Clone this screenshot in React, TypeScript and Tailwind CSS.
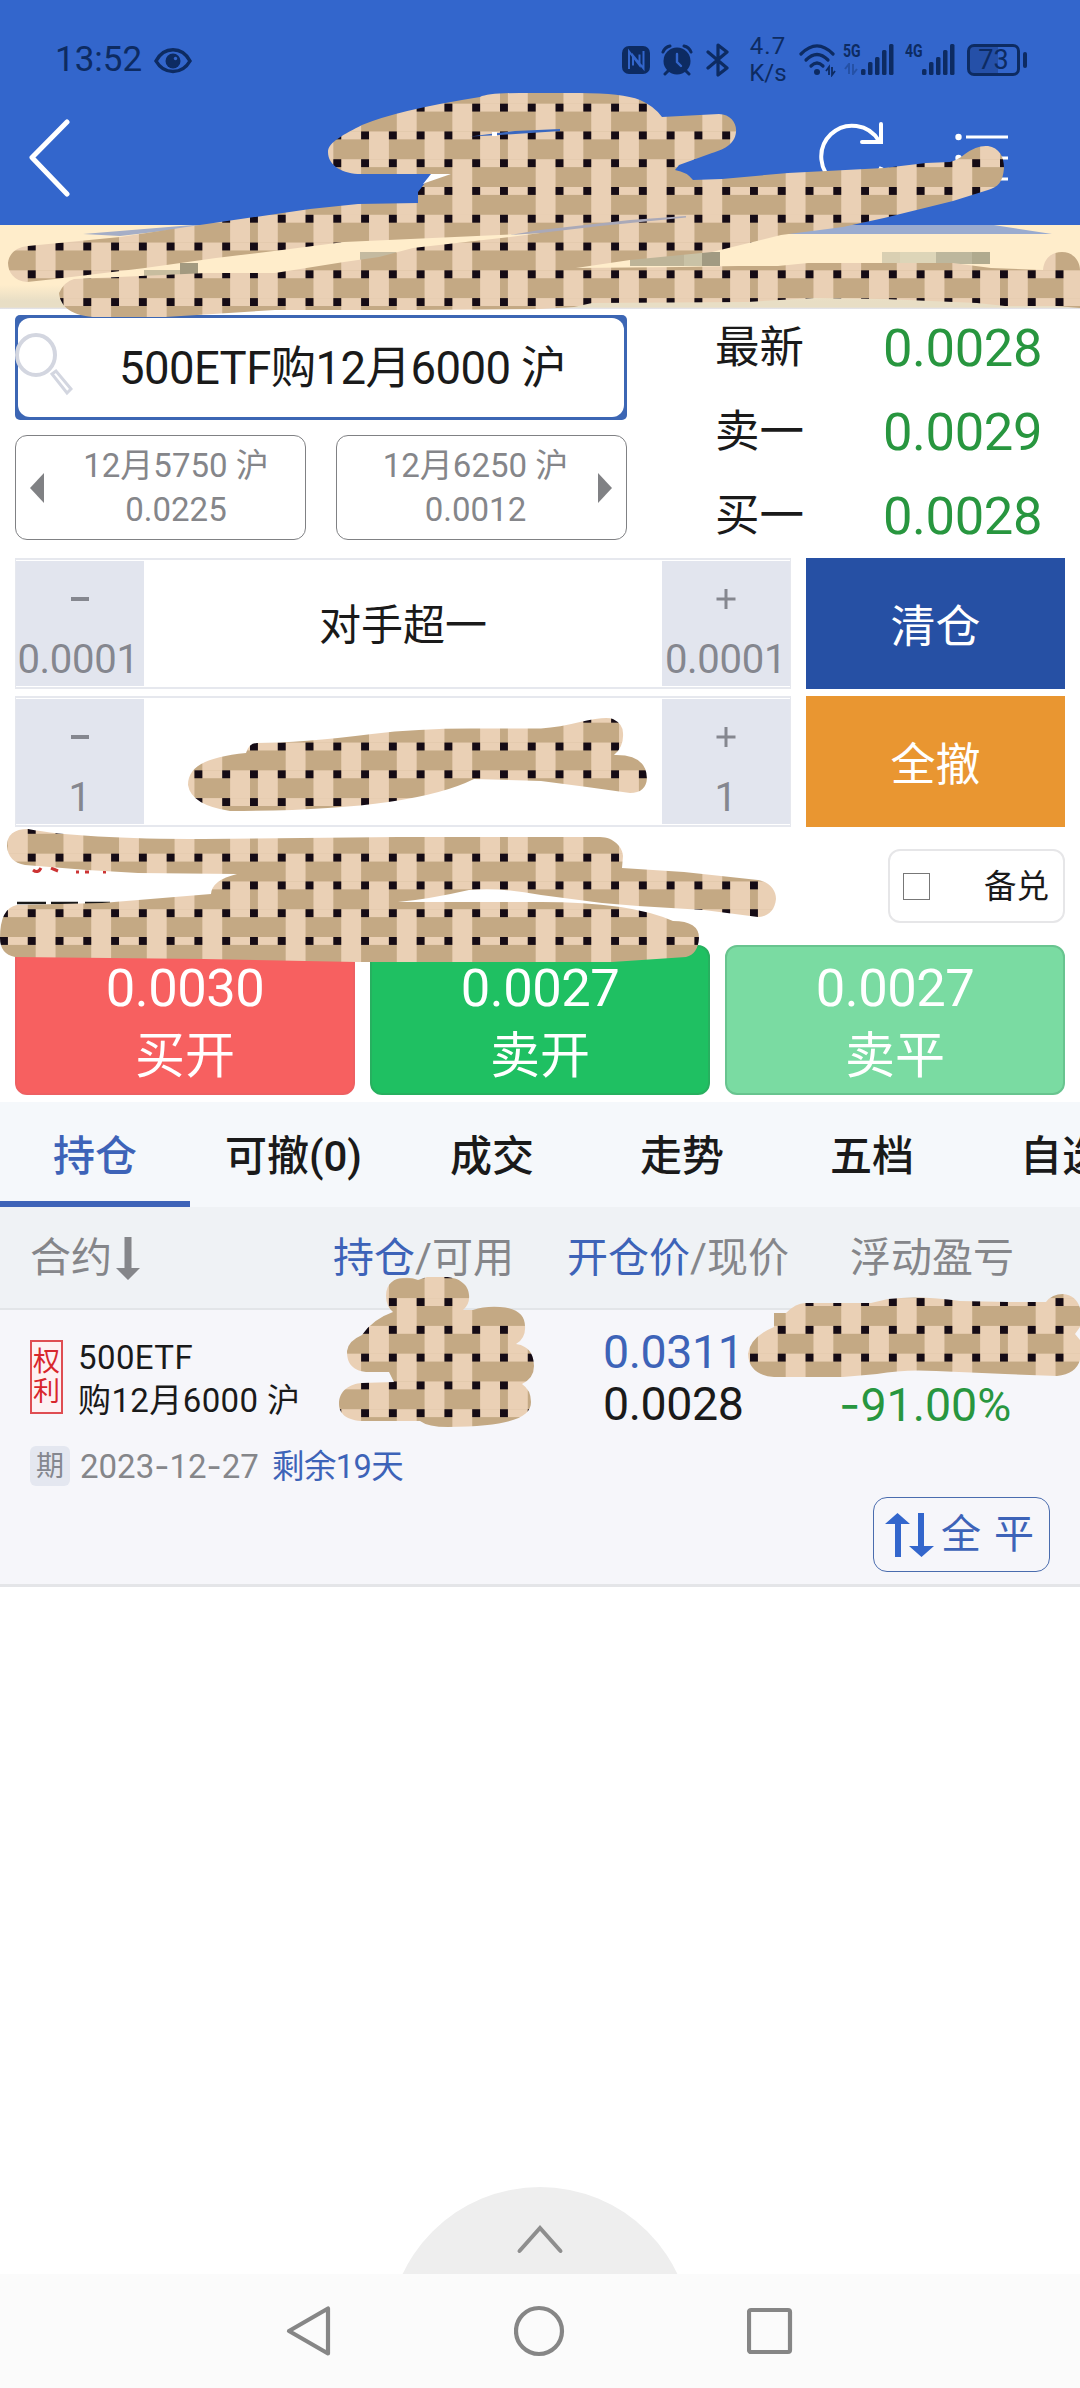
import type { ReactNode } from 'react';

const PITCH = 250 / 9;
const GAP = 7.9;

const quotes = [
  { label: '最新', value: '0.0028' },
  { label: '卖一', value: '0.0029' },
  { label: '买一', value: '0.0028' },
];

const tabs = ['持仓', '可撤(0)', '成交', '走势', '五档', '自选'];

function SignalBars() {
  return (
    <svg width="34" height="32" viewBox="0 0 34 32" fill="currentColor">
      <rect x="0" y="25" width="4.5" height="6" rx="1.5" />
      <rect x="7" y="18" width="4.5" height="13" rx="1.5" />
      <rect x="14" y="13" width="4.5" height="18" rx="1.5" />
      <rect x="21" y="6" width="4.5" height="25" rx="1.5" />
      <rect x="28" y="0" width="4.5" height="31" rx="1.5" />
    </svg>
  );
}

function StatusBar() {
  return (
    <div className="flex h-[120px] items-center pl-[55px] pr-[53px] text-[#0d2b62]">
      <span className="text-[35px] leading-[40px] w-[99px]">13:52</span>
      <svg width="38" height="28" viewBox="0 0 38 28" className="mt-[2px]">
        <path d="M2 14C10-1 28-1 36 14C28 28 10 28 2 14Z" fill="none" stroke="currentColor" strokeWidth="3.5" />
        <circle cx="19" cy="14" r="7.5" fill="currentColor" />
        <circle cx="21.5" cy="11.5" r="1.7" fill="#3366cc" />
      </svg>
      <div className="ml-auto flex items-center">
        <svg width="30" height="30" viewBox="0 0 30 30">
          <rect x="1" y="1" width="28" height="28" rx="7" fill="currentColor" />
          <path d="M8 24V6.5L18.500 20V9.500M22.5 6V23.5L12 10.500V20.500" fill="none" stroke="#3366cc" strokeWidth="2" />
        </svg>
        <svg width="32" height="32" viewBox="0 0 32 32" className="ml-[10px]">
          <circle cx="16" cy="17" r="13.5" fill="currentColor" />
          <path d="M2 8Q4 3 9 2M30 8Q28 3 23 2M7 27L4 30M25 27L28 30" fill="none" stroke="currentColor" strokeWidth="3" strokeLinecap="round" />
          <path d="M16 10V18L20 22" fill="none" stroke="#3366cc" strokeWidth="2.4" strokeLinecap="round" />
        </svg>
        <svg width="24" height="34" viewBox="0 0 24 34" className="ml-[13px]">
          <path d="M2 9L21 25L12 32V2L21 9L2 25" fill="none" stroke="currentColor" strokeWidth="3.2" strokeLinejoin="round" strokeLinecap="round" />
        </svg>
        <div className="ml-[17px] w-[42px] text-center text-[24px] leading-[27px]">
          <div className="tracking-[1px]">4.7</div>
          <div>K/s</div>
        </div>
        <svg width="38" height="34" viewBox="0 0 38 34" className="ml-[10px]">
          <g fill="none" stroke="currentColor" strokeWidth="3.2" strokeLinecap="round">
            <path d="M2 11Q18-5 34 11" />
            <path d="M7 17Q18 6 29 17" />
            <path d="M12 23Q18 17 24 23" />
          </g>
          <circle cx="18" cy="29" r="3" fill="currentColor" />
          <path d="M30 32V24L27 28M33 24V32L36 28" fill="none" stroke="currentColor" strokeWidth="1.8" />
        </svg>
        <div className="ml-[6px] flex">
          <div className="flex w-[18px] flex-col">
            <span className="h-[19px] w-[23px] origin-left scale-x-[0.78] whitespace-nowrap text-[18px] font-bold leading-[14px]">5G</span>
            <svg width="14" height="12" viewBox="0 0 14 12" className="ml-[1px] opacity-35">
              <path d="M5 11V1L1 6M9 1V11L13 6" fill="none" stroke="currentColor" strokeWidth="2" />
            </svg>
          </div>
          <SignalBars />
        </div>
        <div className="ml-[10px] flex">
          <div className="w-[17px]">
            <span className="block w-[23px] origin-left scale-x-[0.78] whitespace-nowrap text-[18px] font-bold leading-[14px]">4G</span>
          </div>
          <SignalBars />
        </div>
        <div className="ml-[11px] flex h-[32px] w-[53px] items-center justify-center rounded-[7px] border-[3px] border-current bg-[linear-gradient(90deg,#2550a8_60%,#3366cc_60%)] text-[27px] leading-[27px]">
          73
        </div>
        <div className="ml-[3px] h-[16px] w-[4px] rounded-sm bg-current" />
      </div>
    </div>
  );
}

function TopBar() {
  return (
    <div className="h-[225px] bg-[#3366cc]">
      <StatusBar />
      <div className="flex h-[80px] items-center pl-[29px] pr-[72px] text-white">
        <svg width="42" height="78" viewBox="0 0 42 78" className="-mt-[4px]">
          <path d="M38 3L3 38.500L38 75" fill="none" stroke="currentColor" strokeWidth="5" strokeLinecap="round" strokeLinejoin="round" />
        </svg>
        <svg width="68" height="72" viewBox="0 0 68 72" className="ml-auto -mt-[8px]">
          <path d="M64.500 47A31 31 0 1 1 62 21" fill="none" stroke="currentColor" strokeWidth="4" />
          <path d="M64 4V22H45" fill="none" stroke="currentColor" strokeWidth="4" strokeLinecap="round" />
        </svg>
        <svg width="53" height="48" viewBox="0 0 53 48" className="ml-[70px] -mt-[7px]">
          <path d="M11 4H53M11 25H53M11 46H53" stroke="currentColor" strokeWidth="3" />
          <g fill="currentColor">
            <circle cx="3.500" cy="4" r="3.200" />
            <circle cx="3.500" cy="25" r="3.200" />
            <circle cx="3.500" cy="46" r="2" />
          </g>
        </svg>
      </div>
    </div>
  );
}

function NoticeBar() {
  return (
    <div className="flex h-[84px] flex-col bg-[linear-gradient(180deg,#ffedcb_0_60px,#e8dec5_76px_82px,#dfe3f2)]">
      <svg width="1080" height="60" viewBox="0 0 1080 60">
        <path d="M83 9L193 0H215L120 11Z" fill="#a5aec6" />
        <path d="M770 9L884 -8H945L1000 1L1052 9Z" fill="#9aabcf" />
        <rect x="882" y="27" width="18" height="12" fill="#d9cfb2" />
        <rect x="900" y="27" width="36" height="12" fill="#ddd5b8" />
        <rect x="936" y="27" width="36" height="12" fill="#bdb79d" />
        <rect x="972" y="27" width="18" height="12" fill="#b0aa8e" />
        <rect x="360" y="27" width="36" height="12" fill="#c4baa0" />
        <rect x="630" y="27" width="54" height="14" fill="#bdb498" />
        <rect x="684" y="27" width="18" height="14" fill="#c9c2a6" />
        <rect x="702" y="27" width="18" height="14" fill="#a19a82" />
        <rect x="144" y="45" width="36" height="12" fill="#c8bd9f" />
        <rect x="180" y="38" width="18" height="12" fill="#a39a80" />
      </svg>
    </div>
  );
}

function SideContract({ name, price, side }: { name: string; price: string; side: 'left' | 'right' }) {
  return (
    <div className="flex h-[105px] w-[291px] items-center rounded-[12px] border-[1.5px] border-[#808184] pt-[1px] text-[33px] leading-[44px] text-[#85868a]">
      {side === 'left' && (
        <svg width="14" height="30" viewBox="0 0 14 30" className="ml-[14px]">
          <path d="M14 0V30L0 15Z" fill="#808184" />
        </svg>
      )}
      <div className={side === 'left' ? 'flex-1 pl-[3px] text-center' : 'flex-1 pl-[16px] text-center'}>
        <div className="whitespace-nowrap">{name}</div>
        <div>{price}</div>
      </div>
      {side === 'right' && (
        <svg width="14" height="30" viewBox="0 0 14 30" className="mr-[14px]">
          <path d="M0 0V30L14 15Z" fill="#808184" />
        </svg>
      )}
    </div>
  );
}

function ContractPanel() {
  return (
    <div className="flex h-[249px] px-[15px] pt-[6px]">
      <div className="w-[612px]">
        <div className="h-[105px] rounded-[5px] bg-[#3c66b4] p-[3px]">
          <div className="flex h-full items-center rounded-[12px] bg-white">
            <svg width="58" height="74" viewBox="0 0 58 74" className="-ml-[3px] -mt-[3px]">
              <g fill="none" stroke="#d3d6e0" strokeWidth="4">
                <ellipse cx="21" cy="26" rx="19" ry="20" />
                <path d="M37 45L41 42L56 60L52 64Z" strokeWidth="3" />
              </g>
            </svg>
            <span className="ml-[46px] mt-[2px] whitespace-nowrap text-[45.5px] leading-[60px] tracking-[-0.6px] text-[#1a1a1a]">500ETF购12月6000 沪</span>
          </div>
        </div>
        <div className="mt-[15px] flex justify-between">
          <SideContract name="12月5750 沪" price="0.0225" side="left" />
          <SideContract name="12月6250 沪" price="0.0012" side="right" />
        </div>
      </div>
      <div className="ml-[88px] flex-1 pr-[23px]">
        {quotes.map((q) => (
          <div key={q.label} className="flex h-[84px] -translate-y-[9px] items-center justify-between">
            <span className="text-[44.5px] text-[#1a1a1a]">{q.label}</span>
            <span className="text-[52.5px] tracking-[-0.4px] text-[#28963f]">{q.value}</span>
          </div>
        ))}
      </div>
    </div>
  );
}

function StepButton({ sign, step }: { sign: 'minus' | 'plus'; step: string }) {
  return (
    <div className="flex w-[128px] flex-col items-center bg-[#e2e5ee] text-[#85878f]">
      <svg width="20" height="20" viewBox="0 0 20 20" className="mt-[28px]">
        {sign === 'minus' ? (
          <path d="M1 10H19" stroke="currentColor" strokeWidth="4" />
        ) : (
          <path d="M0.500 10H19.500M10 0V20" stroke="currentColor" strokeWidth="3" />
        )}
      </svg>
      <span
        className={`mt-[25.5px] text-[40px] leading-[50px] tracking-[-0.3px] ${
          step.length > 1 && sign === 'minus' ? '-ml-[4px]' : '-ml-[1px]'
        }`}
      >
        {step}
      </span>
    </div>
  );
}

function StepperRow({ step, value, action, tone }: { step: string; value: ReactNode; action: string; tone: string }) {
  return (
    <div className="flex h-[131px] gap-[15px]">
      <div className="flex w-[776px] justify-between border border-y-2 border-[#e6e8ee] py-[1px]">
        <StepButton sign="minus" step={step} />
        <div className="flex items-center pt-[3px] text-[42px] text-[#1a1a1a]">{value}</div>
        <StepButton sign="plus" step={step} />
      </div>
      <div className={`flex flex-1 items-center justify-center pt-[8px] text-[45px] text-white ${tone}`}>{action}</div>
    </div>
  );
}

function OrderButton({ price, label, tone }: { price: string; label: string; tone: string }) {
  return (
    <div className={`flex h-[150px] w-[340px] flex-col items-center rounded-[12px] border-2 text-white ${tone}`}>
      <span className="mt-[10px] text-[52.5px] leading-[62px] tracking-[-0.5px]">{price}</span>
      <span className="mt-[7px] text-[50px] leading-[60px]">{label}</span>
    </div>
  );
}

function Tabs() {
  return (
    <div className="flex h-[105px] overflow-hidden bg-[#f5f8fb] text-[42px] font-medium text-[#1a1a1a]">
      {tabs.map((tab, i) => (
        <div
          key={tab}
          className={`flex shrink-0 items-center justify-center ${i === 1 ? 'w-[207px]' : 'w-[190px]'} ${
            i === 0 ? 'border-b-[6px] border-[#3d63b8] pt-[9px] text-[#3d63b8]' : 'pt-[3px]'
          }`}
        >
          {tab}
        </div>
      ))}
    </div>
  );
}

function PositionTable() {
  return (
    <>
      <div className="flex h-[103px] items-center border-b-2 border-[#e2e5e8] bg-[#eff2f5] pl-[30px] pt-[2px] text-[41px] text-[#85868a]">
        <div className="flex w-[303px] items-center">
          合约
          <svg width="24" height="43" viewBox="0 0 24 43" className="ml-[4px]">
            <path d="M8.500 0H15.500V31H24L12 43L0 31H8.500Z" fill="currentColor" />
          </svg>
        </div>
        <div className="w-[234px]">
          <span className="text-[#3d63b8]">持仓</span>/可用
        </div>
        <div className="w-[283px]">
          <span className="text-[#3d63b8]">开仓价</span>/现价
        </div>
        <div>浮动盈亏</div>
      </div>
      <div className="h-[277px] border-b-[3px] border-[#e4e5e8] bg-[#f6f6fa] px-[30px] pt-[26px]">
        <div className="flex h-[90px]">
          <div className="mt-[4px] flex h-[74px] w-[33px] flex-col items-center justify-center border-2 border-[#df4d52] bg-[#fdf1f3] text-[27px] leading-[30px] text-[#d8262c]">
            <span>权</span>
            <span>利</span>
          </div>
          <div className="ml-[15px] w-[525px] text-[33px] leading-[43px] tracking-[0.4px] text-[#1a1a1a]">
            <div>500ETF</div>
            <div>购12月6000 沪</div>
          </div>
          <div className="-mt-[10px] w-[236px] text-[46.5px] leading-[52px] tracking-[-0.4px]">
            <div className="text-[#3d63b8]">0.0311</div>
            <div className="text-[#1a1a1a]">0.0028</div>
          </div>
          <div className="mt-[42px] whitespace-nowrap text-[46.500px] leading-[52px] text-[#28963f]">
            <span className="font-['Inter']">-</span>91.00%
          </div>
        </div>
        <div className="mt-[20px] flex h-[40px] items-center text-[33px] leading-[40px]">
          <span className="flex h-[40px] w-[40px] items-center justify-center rounded-[6px] bg-[#e4e7f0] pt-[2px] text-[28px] text-[#85878f]">期</span>
          <span className="ml-[10px] w-[192px] whitespace-nowrap text-[#85868a]">
            2023<span className="font-['Inter']">-</span>12<span className="font-['Inter']">-</span>27
          </span>
          <span className="pt-[2px] text-[32.5px] tracking-[-0.6px] text-[#3d63b8]">剩余19天</span>
        </div>
        <div className="mt-[11px] ml-auto flex h-[75px] w-[177px] items-center rounded-[14px] border-[1.5px] border-[#4a6cae] pl-[11px] text-[40px] text-[#3d63b8]">
          <svg width="50" height="44" viewBox="0 0 50 44">
            <path d="M10 44V11H0L12.500 0L25 11H16V44ZM33 0V33H24L36.500 44L49 33H39V0Z" fill="#3366cc" />
          </svg>
          <span className="ml-[6px]">全</span>
          <span className="ml-[13px]">平</span>
        </div>
      </div>
    </>
  );
}

function BottomBar() {
  return (
    <div className="mt-auto">
      <svg width="304" height="87" viewBox="0 0 304 87" className="mx-auto block">
        <circle cx="152" cy="152" r="152" fill="#eeeeee" />
        <path d="M131.500 64L152 41L172.500 64" fill="none" stroke="#8e8e8e" strokeWidth="4" strokeLinecap="round" />
      </svg>
      <div className="flex h-[114px] items-center justify-between bg-[#fbfbfb] pl-[285px] pr-[285px]">
        <svg width="48" height="52" viewBox="0 0 48 52" fill="none" stroke="#868686" strokeWidth="4.200" strokeLinejoin="round">
          <path d="M43 3.500V48.500L4 26Z" />
        </svg>
        <svg width="52" height="52" viewBox="0 0 52 52" fill="none" stroke="#868686" strokeWidth="4.200">
          <circle cx="25" cy="26" r="23" />
        </svg>
        <svg width="48" height="52" viewBox="0 0 48 52" fill="none" stroke="#868686" strokeWidth="4.200">
          <rect x="2" y="5" width="41" height="42" rx="2" />
        </svg>
      </div>
    </div>
  );
}

// Woven brush strokes that hide the private fields
function WovenStrokes() {
  const cells = Array.from({ length: 81 }, (_, n) => ({ col: n % 9, row: Math.floor(n / 9) }));
  return (
    <svg width="1080" height="2388" viewBox="0 0 1080 2388" className="pointer-events-none absolute left-0 top-0">
      <defs>
        <pattern id="weave" x="0" y="187" width="250" height="250" patternUnits="userSpaceOnUse">
          <rect width="250" height="250" fill="#c4a984" />
          {cells.map(({ col, row }) => (
            <g key={`${col}-${row}`}>
              <rect
                x={col * PITCH + GAP}
                y={row * PITCH}
                width={PITCH - GAP}
                height={(row + col) % 2 === 0 ? GAP : PITCH + 0.2}
                fill="#ead0b5"
              />
              <rect x={col * PITCH} y={row * PITCH} width={GAP} height={GAP} fill="#150b15" />
            </g>
          ))}
        </pattern>
      </defs>
      <g fill="#fff">
        <path d="M423 184L431 174H452L440 180Z" />
      </g>
      <g stroke="#c33" strokeWidth="3" fill="none">
        <path d="M33 870Q38 874 41 868M51 868L58 871M76 872H79M85 872H89M103 872H106" />
      </g>
      <path d="M17 903H46M51 903H78M85 903H110" stroke="#1a1a1a" strokeWidth="2.500" />
      <g fill="url(#weave)">
        <path d="M328 152C328 142 345 134 362 125Q398 110 480 97Q488 93 520 93H580Q622 93 640 100Q654 106 662 117L719 114C731 114 737 124 736 132C735 145 722 150 712 153L679 165L675 170Q687 172 693 180L722 179L788 173L884 168L926 163L950 162Q958 160 965 154Q977 145 988 146C999 148 1004 156 1004 168C1003 182 998 187 988 190L953 201L884 218L843 227L781 235L712 252L681 255L630 260L576 268L681 267L738 266L778 266L808 263H953L991 268L1043 270C1044 258 1052 252 1062 252C1074 252 1080 262 1080 270V308L1056 306H1005L977 303L884 299L815 298L747 302L592 303L574 307L540 309L413 310H275L213 314L165 317H93C68 315 60 304 59 293Q65 281 74 279L207 273H275L344 262L379 257L413 248L448 244L510 237L540 233L344 242L282 250L216 258L145 268L55 279L27 282C14 281 8 272 8 263C9 253 17 247 28 246L120 237L193 226L310 209L358 204L418 203V192L425 183L451 174H361C343 174 328 166 328 152Z" />
        <path d="M188 785C188 766 207 757 246 753Q249 743 257 743Q300 743 372 734Q420 728 480 728.500H541Q560 727 580 722Q606 716 613 719Q623 724 623 733Q624 747 614 755Q646 754 647 778Q646 793 630 793L587 787L541 781L474 779Q410 811 230 811Q191 805 188 785Z" />
        <path d="M28 829Q80 839 204 839L398 837H600C614 837 623 848 623 856L622 868L684 872L758 880C770 882 776 890 776 899C775 911 767 917 758 917L704 910L638 906L602 903L541 895Q500 887 469 890Q430 899 398 902H541Q630 902 673 921Q699 921 699 938Q698 954 686 957L612 962H357L204 959L15 957Q0 954 0 938Q0 908 17 905L102 903L211 894Q212 880 237 874L138 873L87 870L25 865Q8 862 7 846Q7 829 28 829Z" />
        <path d="M386 1296C386 1283 395 1278 403 1278Q411 1277 418 1280L427 1277H445C460 1277 469 1286 469 1295Q470 1304 463 1310L473 1310Q485 1306 500 1307C518 1308 525 1316 525 1326Q526 1338 516 1344C530 1346 534 1356 534 1366Q534 1378 522 1384Q531 1390 531 1402C531 1418 510 1426 448 1427Q428 1427 420 1421H364C346 1421 339 1413 339 1404C339 1390 350 1384 362 1383L394 1382L389 1372H366C350 1370 347 1361 347 1351Q348 1341 362 1335Q373 1319 393 1312Q386 1306 386 1296Z" />
        <path d="M748 1354Q750 1337 774 1327V1313H786Q796 1303 805 1303H871L888 1299Q920 1295 960 1301L1008 1302H1046Q1052 1294 1063 1294Q1076 1295 1080 1308V1327L1075 1334L1080 1340V1360Q1076 1374 1057 1376L1005 1374L936 1371Q905 1369 877 1374L843 1377H774Q749 1375 748 1354Z" />
      </g>
      <path d="M470 136.500L515 131L560 129V131L500 135Z" fill="#3a68c0" />
      <path d="M492 132H497V136H492Z" fill="#fff" />
      <path d="M510 235L540 230L630 220L686 216V217.500L600 226L540 233Z" fill="#aaa9b8" />
    </svg>
  );
}

export default function App() {
  return (
    <div className="relative flex h-[2388px] w-[1080px] flex-col overflow-hidden bg-white font-['Roboto','Noto_Sans_CJK_SC',sans-serif]">
      <TopBar />
      <NoticeBar />
      <ContractPanel />
      <div className="flex flex-col gap-[7px] px-[15px]">
        <StepperRow step="0.0001" value="对手超一" action="清仓" tone="bg-[#2650a4]" />
        <StepperRow step="1" value="" action="全撤" tone="bg-[#e99631]" />
      </div>
      <div className="mt-[22px] mr-[15px] flex h-[74px] w-[177px] items-center self-end rounded-[12px] border-2 border-[#e6e6e8] pl-[13px] text-[32.5px] text-[#1a1a1a]">
        <span className="h-[27px] w-[27px] border-[1.5px] border-[#777]" />
        <span className="ml-[54px] mt-[2px]">备兑</span>
      </div>
      <div className="mt-[22px] flex justify-between px-[15px]">
        <OrderButton price="0.0030" label="买开" tone="border-[#ee6062] bg-[#f76060]" />
        <OrderButton price="0.0027" label="卖开" tone="border-[#27b05f] bg-[#1fc062]" />
        <OrderButton price="0.0027" label="卖平" tone="border-[#68c48f] bg-[#7adba2]" />
      </div>
      <div className="h-[7px] shrink-0" />
      <Tabs />
      <PositionTable />
      <BottomBar />
      <WovenStrokes />
    </div>
  );
}
